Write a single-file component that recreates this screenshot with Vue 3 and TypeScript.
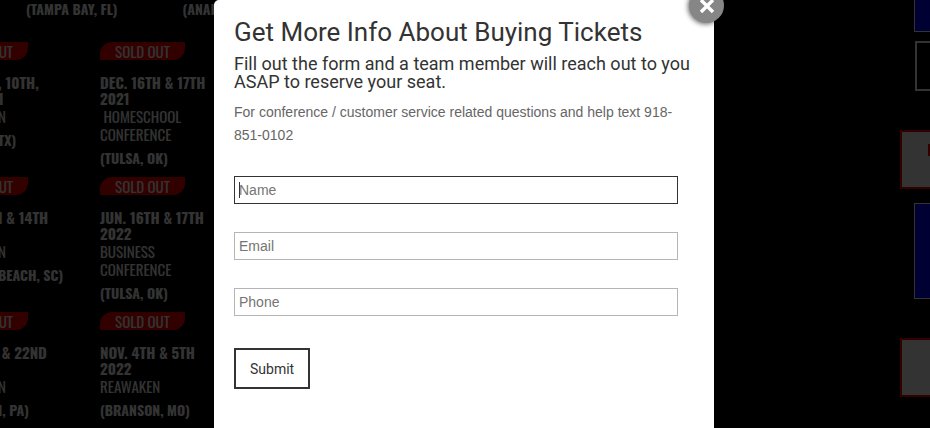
<script setup lang="ts">
import { reactive } from 'vue'

interface Stop {
  badge: string
  dates: string[]
  title: string[]
  place: string
}

const columns: Stop[][] = [
  [
    { badge: 'UT', dates: [', 10TH,', '1'], title: ['N'], place: 'TX)' },
    { badge: 'UT', dates: ['I & 14TH', '\u00a0'], title: ['N'], place: 'BEACH, SC)' },
    { badge: 'UT', dates: ['\u00a0& 22ND', '\u00a0'], title: ['N'], place: 'I, PA)' },
  ],
  [
    {
      badge: 'SOLD OUT',
      dates: ['DEC. 16TH & 17TH', '2021'],
      title: ['\u00a0HOMESCHOOL', 'CONFERENCE'],
      place: '(TULSA, OK)',
    },
    {
      badge: 'SOLD OUT',
      dates: ['JUN. 16TH & 17TH', '2022'],
      title: ['BUSINESS', 'CONFERENCE'],
      place: '(TULSA, OK)',
    },
    {
      badge: 'SOLD OUT',
      dates: ['NOV. 4TH & 5TH', '2022'],
      title: ['REAWAKEN'],
      place: '(BRANSON, MO)',
    },
  ],
]

const form = reactive({ name: '', email: '', phone: '' })
</script>

<template>
  <div class="screen">
    <div class="page">
      <main class="tour">
        <div class="cities">
          <span>(TAMPA BAY, FL)</span>
          <span>(ANAHEIM</span>
        </div>
        <div class="columns">
          <div v-for="(column, c) in columns" :key="c" class="column">
            <article v-for="(stop, s) in column" :key="s" class="stop">
              <span class="badge">{{ stop.badge }}</span>
              <h3 class="dates">
                <span v-for="line in stop.dates" :key="line">{{ line }}</span>
              </h3>
              <p class="title">
                <span v-for="line in stop.title" :key="line">{{ line }}</span>
              </p>
              <p class="place">{{ stop.place }}</p>
            </article>
          </div>
        </div>
      </main>
      <aside class="side">
        <div class="tile blue first"></div>
        <div class="tile outline"></div>
        <div class="tile gray"><span class="mark"></span></div>
        <div class="tile blue"></div>
        <div class="tile gray"></div>
      </aside>
    </div>

    <div class="overlay">
      <section class="modal" role="dialog" aria-labelledby="modal-title">
        <button class="close" type="button" aria-label="Close">
          <svg viewBox="0 0 16 16" width="16" height="16" aria-hidden="true">
            <path d="M2 2 L14 14 M14 2 L2 14" />
          </svg>
        </button>
        <h1 id="modal-title">Get More Info About Buying Tickets</h1>
        <h2>Fill out the form and a team member will reach out to you ASAP to reserve your seat.</h2>
        <p class="help">
          For conference / customer service related questions and help text 918-851-0102
        </p>
        <form @submit.prevent>
          <div class="field active">
            <input v-model="form.name" type="text" placeholder="Name" aria-label="Name" />
            <span class="caret"></span>
          </div>
          <div class="field">
            <input v-model="form.email" type="email" placeholder="Email" aria-label="Email" />
          </div>
          <div class="field">
            <input v-model="form.phone" type="tel" placeholder="Phone" aria-label="Phone" />
          </div>
          <button class="submit" type="submit">Submit</button>
        </form>
      </section>
    </div>
  </div>
</template>

<style>
body {
  background: #000;
}
</style>

<style scoped>
* {
  box-sizing: border-box;
}

h1,
h2,
h3,
p {
  margin: 0;
}

.screen {
  position: relative;
  height: 100vh;
  overflow: hidden;
  background: #000;
}

.page {
  display: flex;
  justify-content: space-between;
  color: #fff;
  font-family: Oswald, 'Liberation Sans Narrow', 'Roboto Condensed', 'Liberation Sans', sans-serif;
  font-size: 14px;
}

.cities {
  display: flex;
  gap: 65px;
  height: 42px;
  padding-left: 26px;
  font-weight: 700;
  line-height: 18px;
  white-space: nowrap;
}

.columns {
  display: grid;
  grid-template-columns: 100px 114px;
}

.stop {
  height: 135px;
  white-space: nowrap;
}

.badge {
  display: block;
  width: 85px;
  height: 18px;
  margin-bottom: 14px;
  border-radius: 12px 0 12px 0;
  background: #f00;
  font-size: 15px;
  line-height: 18px;
  text-align: center;
}

.column:first-child {
  margin-left: -2px;
}

.column:first-child .badge {
  width: 30px;
  padding-right: 15px;
  border-radius: 0 0 12px 0;
  text-align: right;
}

.dates span,
.title span {
  display: block;
}

.dates {
  font-size: 15px;
  line-height: 16px;
}

.title {
  margin: 1px 0 6px;
  font-size: 15px;
  line-height: 18px;
}

.place {
  font-weight: 700;
  line-height: 18px;
}

.side {
  display: flex;
  flex-direction: column;
  align-items: flex-end;
  width: 30px;
}

.tile {
  flex: none;
  width: 16px;
}

.blue {
  height: 96px;
  margin-bottom: 39px;
  border: 1px solid #fff;
  border-right: 0;
  background: #00f;
}

.first {
  height: 32px;
  margin-bottom: 9px;
  border-top: 0;
}

.outline {
  width: 15px;
  height: 50px;
  margin-bottom: 39px;
  border: 2px solid #fff;
  border-right: 0;
}

.gray {
  display: flex;
  justify-content: flex-end;
  width: 30px;
  height: 59px;
  margin-bottom: 14px;
  padding-top: 12px;
  border: 2px solid #f00;
  border-right: 0;
  background: #fff;
}

.mark {
  width: 2px;
  height: 12px;
  background: #f00;
}

.overlay {
  position: absolute;
  inset: 0;
  display: flex;
  justify-content: center;
  padding-right: 2px;
  background: rgba(0, 0, 0, 0.8);
}

.modal {
  position: relative;
  width: 500px;
  max-width: 100%;
  min-height: 100vh;
  padding: 18px 20px 20px;
  border-radius: 5px 5px 0 0;
  background: #fff;
}

h1 {
  color: #333;
  font-family: Roboto, sans-serif;
  font-size: 26px;
  font-weight: 400;
  line-height: 28px;
}

h2 {
  margin-top: 9px;
  color: #333;
  font-family: Roboto, sans-serif;
  font-size: 18px;
  font-weight: 400;
  line-height: 18px;
}

.help {
  margin-top: 10px;
  color: #666;
  font-family: 'Liberation Sans', Arial, sans-serif;
  font-size: 14px;
  line-height: 23px;
}

form {
  margin: 29px 16px 0 0;
}

.field {
  position: relative;
  margin-bottom: 28px;
}

input {
  display: block;
  width: 100%;
  height: 28px;
  padding: 0 4px;
  border: 1px solid #b3b6b8;
  border-radius: 0;
  background: #fff;
  color: #333;
  font-family: 'Liberation Sans', Arial, sans-serif;
  font-size: 14px;
}

input::placeholder {
  color: #757575;
}

.active input {
  border-color: #333;
  outline: none;
}

.caret {
  position: absolute;
  top: 6px;
  left: 5px;
  width: 1px;
  height: 16px;
  background: #333;
}

.submit {
  display: block;
  height: 41px;
  margin-top: 32px;
  padding: 0 14px;
  border: 2px solid #333;
  background: #fff;
  color: #333;
  font-family: Roboto, sans-serif;
  font-size: 14px;
}

.close {
  position: absolute;
  top: -12px;
  right: -10px;
  display: flex;
  align-items: center;
  justify-content: center;
  width: 35px;
  height: 35px;
  padding: 0;
  border: 0;
  border-radius: 50%;
  background: #868686;
  box-shadow: -1px 1px 5px rgba(0, 0, 0, 0.6);
}

.close path {
  fill: none;
  stroke: #fff;
  stroke-width: 3.4;
}
</style>
